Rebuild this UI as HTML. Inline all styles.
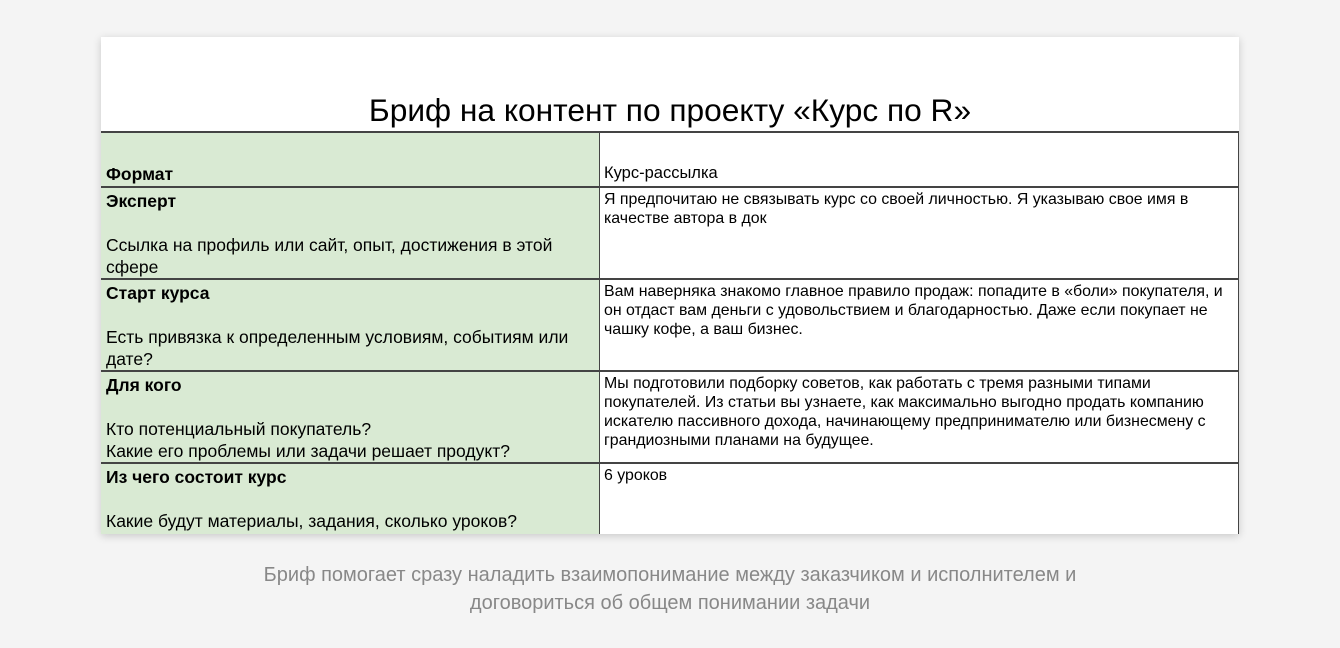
<!DOCTYPE html>
<html><head><meta charset="utf-8"><style>
body{margin:0;width:1340px;height:648px;background:#f4f4f4;font-family:"Liberation Sans",Arial,sans-serif;position:relative;overflow:hidden}
.card{position:absolute;left:101px;top:37px;width:1138px;height:497px;background:#fff;box-shadow:0 2px 8px rgba(0,0,0,.18)}
.title{position:absolute;left:0;width:1138px;top:55px;text-align:center;font-size:31.7px;color:#000}
.l{position:absolute;left:0;width:498px;background:#d9ead3;border-top:2px solid #444;box-sizing:border-box;padding:0 5px;font-size:17.5px;line-height:22px;color:#000;white-space:nowrap}
.r{position:absolute;left:498px;width:640px;border-top:2px solid #444;border-left:1.5px solid #444;border-right:1.5px solid #444;box-sizing:border-box;padding:2px 4px;font-size:15.9px;line-height:19px;color:#000;white-space:nowrap}
b{font-weight:bold}
.cap{position:absolute;top:561px;left:0;width:1340px;text-align:center;color:#888;font-size:20px;line-height:28px}
</style></head><body>
<div class="card">
<div class="title">Бриф на контент по проекту «Курс по R»</div>
<div class="l" style="top:94px;height:56px;padding-top:30px"><b>Формат</b></div>
<div class="r" style="top:94px;height:56px;padding-top:31px;font-size:16.5px">Курс-рассылка</div>
<div class="l" style="top:149px;height:93px;padding-top:2px"><b>Эксперт</b><br><br>Ссылка на профиль или сайт, опыт, достижения в этой<br>сфере</div>
<div class="r" style="top:149px;height:93px">Я предпочитаю не связывать курс со своей личностью. Я указываю свое имя в<br>качестве автора в док</div>
<div class="l" style="top:241px;height:93px;padding-top:2px"><b>Старт курса</b><br><br>Есть привязка к определенным условиям, событиям или<br>дате?</div>
<div class="r" style="top:241px;height:93px">Вам наверняка знакомо главное правило продаж: попадите в «боли» покупателя, и<br>он отдаст вам деньги с удовольствием и благодарностью. Даже если покупает не<br>чашку кофе, а ваш бизнес.</div>
<div class="l" style="top:333px;height:93px;padding-top:2px"><b>Для кого</b><br><br>Кто потенциальный покупатель?<br>Какие его проблемы или задачи решает продукт?</div>
<div class="r" style="top:333px;height:93px">Мы подготовили подборку советов, как работать с тремя разными типами<br>покупателей. Из статьи вы узнаете, как максимально выгодно продать компанию<br>искателю пассивного дохода, начинающему предпринимателю или бизнесмену с<br>грандиозными планами на будущее.</div>
<div class="l" style="top:425px;height:72px;padding-top:2px"><b>Из чего состоит курс</b><br><br>Какие будут материалы, задания, сколько уроков?</div>
<div class="r" style="top:425px;height:72px">6 уроков</div>
</div>
<div class="cap">Бриф помогает сразу наладить взаимопонимание между заказчиком и исполнителем и<br>договориться об общем понимании задачи</div>
</body></html>
